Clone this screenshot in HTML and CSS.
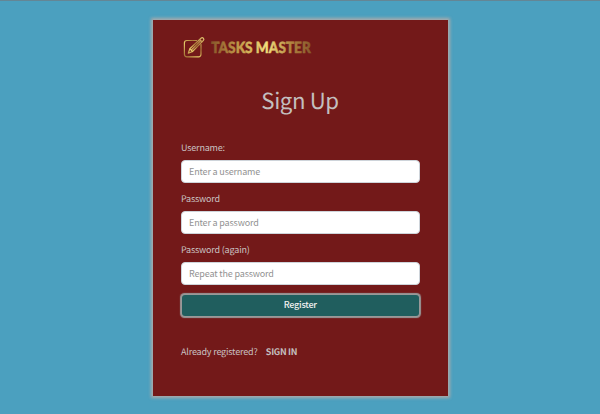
FILE: index.html
```html
<!DOCTYPE html>
<html lang="en">
<head>
<meta charset="utf-8">
<title>Tasks Master - Sign Up</title>
<link rel="stylesheet" href="styles.css">
</head>
<body>
<main class="card">
  <svg class="logo" width="150" height="26" viewBox="0 0 150 26" role="img" aria-label="Tasks Master">
    <defs>
      <linearGradient id="gold" gradientUnits="userSpaceOnUse" x1="30" y1="0" x2="130" y2="0">
        <stop offset="0" stop-color="#87552a"/>
        <stop offset=".3" stop-color="#c7a04c"/>
        <stop offset=".56" stop-color="#f2df7c"/>
        <stop offset=".8" stop-color="#b18440"/>
        <stop offset="1" stop-color="#88592c"/>
      </linearGradient>
      <linearGradient id="frame" gradientUnits="userSpaceOnUse" x1="2" y1="22" x2="23" y2="2">
        <stop offset="0" stop-color="#9c6a31"/>
        <stop offset=".35" stop-color="#e5c968"/>
        <stop offset=".6" stop-color="#aa7a3a"/>
        <stop offset="1" stop-color="#e9d176"/>
      </linearGradient>
    </defs>
    <g fill="none" stroke="url(#frame)" stroke-width="1.2" stroke-linejoin="round" stroke-linecap="round">
      <path d="M15.5 6.5H5.9a2.5 2.5 0 0 0-2.5 2.5v11.3a2.5 2.5 0 0 0 2.5 2.5h11.6a2.5 2.5 0 0 0 2.5-2.5V10.5"/>
      <path d="M7.3 19.2l1.5-4.4L20 4.2q1.2-1 2.3 0t.1 2.2L11.5 17.5zM8.8 14.8l2.7 2.7M18.7 5.4l2.4 2.4M10.2 16.2l9.6-9.6"/>
    </g>
    <text class="logo-text" x="30.3" y="19.4" textLength="99.5" lengthAdjust="spacingAndGlyphs" fill="url(#gold)" stroke="url(#gold)" stroke-width=".5">TASKS MASTER</text>
  </svg>
  <h1 class="title">Sign Up</h1>
  <form class="form">
    <label class="label" for="username">Username:</label>
    <input class="input" id="username" type="text" placeholder="Enter a username">
    <label class="label" for="password1">Password</label>
    <input class="input" id="password1" type="password" placeholder="Enter a password">
    <label class="label" for="password2">Password (again)</label>
    <input class="input" id="password2" type="password" placeholder="Repeat the password">
    <button class="button" type="button">Register</button>
  </form>
  <p class="signin">Already registered? <a class="signin-link" href="#">SIGN IN</a></p>
</main>
</body>
</html>
```
FILE: styles.css
```css
* {
  box-sizing: border-box;
}

body {
  margin: 0;
  height: 414px;
  padding-top: 19px;
  overflow: hidden;
  border-top: 1px solid #648695;
  background: #4ba0bf;
  color: #c9c1c1;
  font: 9px/14px "Noto Sans CJK SC", sans-serif;
  letter-spacing: -.18px;
  text-rendering: geometricPrecision;
}

.card {
  width: 295px;
  height: 376px;
  margin: 0 auto;
  padding: 14px 28px 0;
  background: #731919;
  box-shadow: 0 0 3px 2px #aaa;
}

.logo {
  display: block;
}

.logo-text {
  font: 900 15.5px Lato, sans-serif;
  letter-spacing: 0;
}

.title {
  margin: 22px 0 0;
  color: #c3bfbf;
  font-size: 22.2px;
  font-weight: 400;
  letter-spacing: -.4px;
  line-height: 36px;
  text-align: center;
}

.form {
  display: flex;
  flex-direction: column;
  margin: 23px 0 0 .5px;
}

.label {
  height: 14px;
  margin-bottom: 5px;
}

.input {
  height: 23px;
  margin: 0 0 9.2px;
  padding: 0 7px 1px;
  border: 1px solid #ced4da;
  border-radius: 4px;
  background: #fff;
  font: inherit;
  letter-spacing: -.16px;
}

.input::placeholder {
  color: #929292;
}

.button {
  height: 21px;
  margin: 0 1px;
  padding: 0;
  border: 0;
  border-radius: 3px;
  background: #205e5e;
  box-shadow: 0 0 1px 1.5px #999;
  color: #f1f1f1;
  font: inherit;
  font-weight: 500;
  letter-spacing: -.22px;
}

.signin {
  margin: 29px 0 0 .5px;
}

.signin-link {
  margin-left: 6.5px;
  color: #c3bfbf;
  font-weight: 700;
  letter-spacing: -.32px;
  text-decoration: none;
}
```
